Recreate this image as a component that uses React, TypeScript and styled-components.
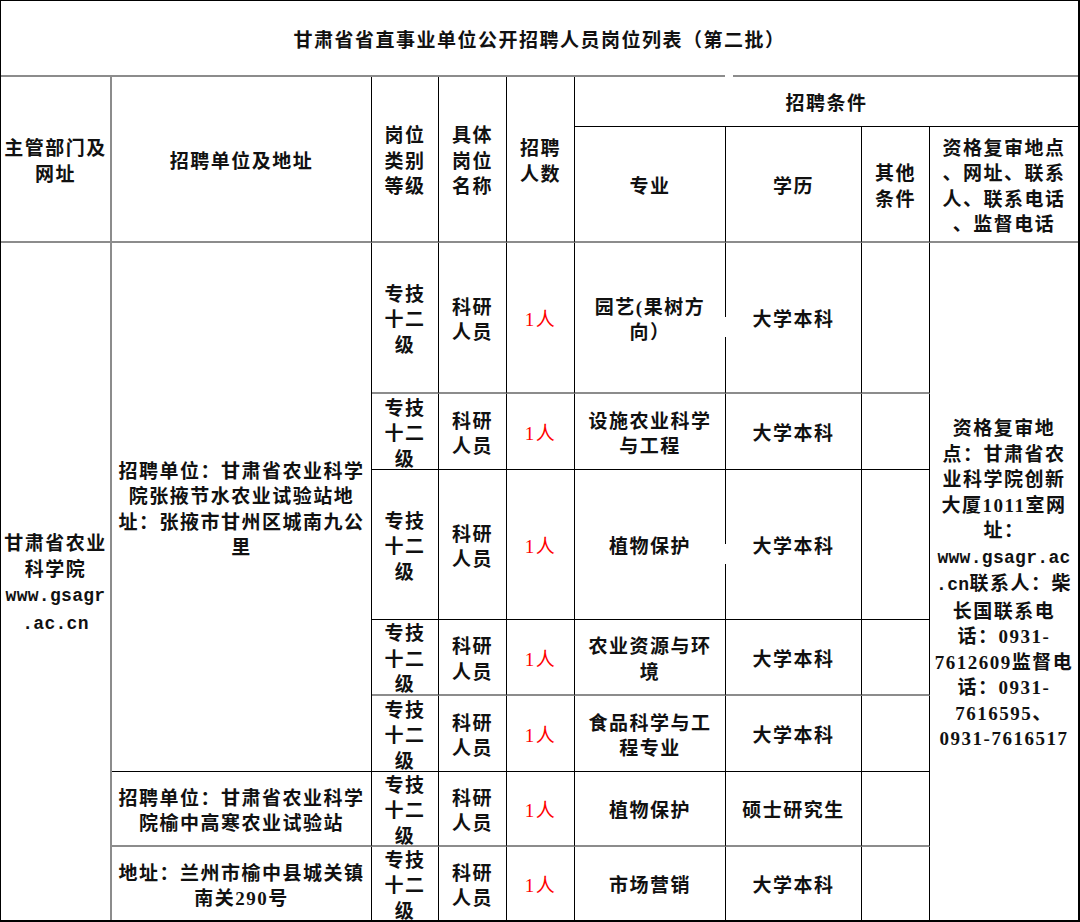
import React from 'react';
import styled, { createGlobalStyle } from 'styled-components';

const GREY = '#8c8c8c';
const INK = '#000';

type Line = 'grey' | 'black' | 'none';

const edge = (l?: Line) =>
    l === 'grey' ? `2px solid ${GREY}` : l === 'black' ? `1px solid ${INK}` : 'none';

const GlobalStyle = createGlobalStyle`
    html, body {
        margin: 0;
        padding: 0;
        background: #fff;
    }
    body {
        font-family: "Liberation Serif", "Noto Sans CJK SC", serif;
    }
`;

const Sheet = styled.div`
    box-sizing: border-box;
    width: 1080px;
    height: 922px;
    display: grid;
    grid-template-columns: 111px 260px 67px 68px 68px 151px 136px 68px 148px;
    grid-template-rows: 76px 50px 116px 151px 76px 150px 76px 76px 75px 73px;
    border-top: 1px solid ${INK};
    border-left: 1px solid ${INK};
    border-right: 2px solid ${INK};
    border-bottom: 2px solid ${INK};
    background: #fff;
    color: #111;
    font-size: 19px;
    line-height: 25.5px;
    letter-spacing: 1.5px;
    font-weight: 600;
`;

interface CellProps {
    $rows?: number;
    $cols?: number;
    $right?: Line;
    $bottom?: Line;
    $red?: boolean;
    $gap?: boolean;
}

const Cell = styled.div<CellProps>`
    position: relative;
    box-sizing: border-box;
    grid-row: span ${p => p.$rows ?? 1};
    grid-column: span ${p => p.$cols ?? 1};
    border-right: ${p => edge(p.$right)};
    border-bottom: ${p => edge(p.$bottom)};
    display: flex;
    align-items: center;
    justify-content: center;
    text-align: center;
    white-space: nowrap;
    padding: 5px 2px 0;
    color: ${p => (p.$red ? '#ff0000' : 'inherit')};
    font-weight: ${p => (p.$red ? 400 : 'inherit')};

    /* the scan has a small break in the line right of this cell */
    ${p =>
        p.$gap &&
        `
        &::after {
            content: '';
            position: absolute;
            right: -1px;
            top: 74px;
            width: 1px;
            height: 20px;
            background: #fff;
        }
    `}
`;

const TitleCell = styled(Cell)`
    &::after {
        content: '';
        position: absolute;
        left: 724px;
        bottom: -2px;
        width: 8px;
        height: 2px;
        background: #fff;
    }
`;

const Url = styled.span`
    font-family: "Liberation Mono", monospace;
    font-size: 18px;
    letter-spacing: 0.3px;
    font-weight: bold;
`;

const Lines = ({ lines }: { lines: React.ReactNode[] }) => (
    <div>
        {lines.map((l, i) => (
            <React.Fragment key={i}>
                {i > 0 && <br />}
                {l}
            </React.Fragment>
        ))}
    </div>
);

interface Post {
    spec: string[];
    edu: string;
    bottom: Line;
    gap?: boolean;
}

const posts: Post[] = [
    { spec: ['园艺(果树方', '向）'], edu: '大学本科', bottom: 'grey', gap: true },
    { spec: ['设施农业科学', '与工程'], edu: '大学本科', bottom: 'black' },
    { spec: ['植物保护'], edu: '大学本科', bottom: 'black', gap: true },
    { spec: ['农业资源与环', '境'], edu: '大学本科', bottom: 'grey' },
    { spec: ['食品科学与工', '程专业'], edu: '大学本科', bottom: 'black' },
    { spec: ['植物保护'], edu: '硕士研究生', bottom: 'grey' },
    { spec: ['市场营销'], edu: '大学本科', bottom: 'none' },
];

const PostRow = ({ post }: { post: Post }) => (
    <>
        <Cell $right="black" $bottom={post.bottom}>
            <Lines lines={['专技', '十二', '级']} />
        </Cell>
        <Cell $right="black" $bottom={post.bottom}>
            <Lines lines={['科研', '人员']} />
        </Cell>
        <Cell $right="black" $bottom={post.bottom} $red>
            1人
        </Cell>
        <Cell $right="black" $bottom={post.bottom} $gap={post.gap}>
            <Lines lines={post.spec} />
        </Cell>
        <Cell $right="black" $bottom={post.bottom}>
            {post.edu}
        </Cell>
        <Cell $right="black" $bottom={post.bottom} />
    </>
);

const App = () => (
    <>
        <GlobalStyle />
        <Sheet>
            <TitleCell $cols={9} $bottom="grey">
                甘肃省省直事业单位公开招聘人员岗位列表（第二批）
            </TitleCell>

            <Cell $rows={2} $right="grey" $bottom="grey">
                <Lines lines={['主管部门及', '网址']} />
            </Cell>
            <Cell $rows={2} $right="black" $bottom="grey">
                招聘单位及地址
            </Cell>
            <Cell $rows={2} $right="black" $bottom="grey">
                <Lines lines={['岗位', '类别', '等级']} />
            </Cell>
            <Cell $rows={2} $right="black" $bottom="grey">
                <Lines lines={['具体', '岗位', '名称']} />
            </Cell>
            <Cell $rows={2} $right="black" $bottom="grey">
                <Lines lines={['招聘', '人数']} />
            </Cell>
            <Cell $cols={4} $bottom="black">
                招聘条件
            </Cell>
            <Cell $right="black" $bottom="grey">
                专业
            </Cell>
            <Cell $right="black" $bottom="grey">
                学历
            </Cell>
            <Cell $right="black" $bottom="grey">
                <Lines lines={['其他', '条件']} />
            </Cell>
            <Cell $bottom="grey">
                <Lines lines={['资格复审地点', '、网址、联系', '人、联系电话', '、监督电话']} />
            </Cell>

            <Cell $rows={7} $right="grey">
                <Lines
                    lines={[
                        '甘肃省农业',
                        '科学院',
                        <Url key="u1">www.gsagr</Url>,
                        <Url key="u2">.ac.cn</Url>,
                    ]}
                />
            </Cell>
            <Cell $rows={5} $right="black" $bottom="black">
                <Lines
                    lines={[
                        '招聘单位：甘肃省农业科学',
                        '院张掖节水农业试验站地',
                        '址：张掖市甘州区城南九公',
                        '里',
                    ]}
                />
            </Cell>
            <PostRow post={posts[0]} />
            <Cell $rows={7}>
                <Lines
                    lines={[
                        '资格复审地',
                        '点：甘肃省农',
                        '业科学院创新',
                        '大厦1011室网',
                        '址：',
                        <Url key="r1">www.gsagr.ac</Url>,
                        <React.Fragment key="r2">
                            <Url>.cn</Url>联系人：柴
                        </React.Fragment>,
                        '长国联系电',
                        '话：0931-',
                        '7612609监督电',
                        '话：0931-',
                        '7616595、',
                        '0931-7616517',
                    ]}
                />
            </Cell>
            {posts.slice(1, 5).map((p, i) => (
                <PostRow key={i} post={p} />
            ))}

            <Cell $right="black" $bottom="grey">
                <Lines lines={['招聘单位：甘肃省农业科学', '院榆中高寒农业试验站']} />
            </Cell>
            <PostRow post={posts[5]} />

            <Cell $right="black">
                <Lines lines={['地址：兰州市榆中县城关镇', '南关290号']} />
            </Cell>
            <PostRow post={posts[6]} />
        </Sheet>
    </>
);

export default App;
